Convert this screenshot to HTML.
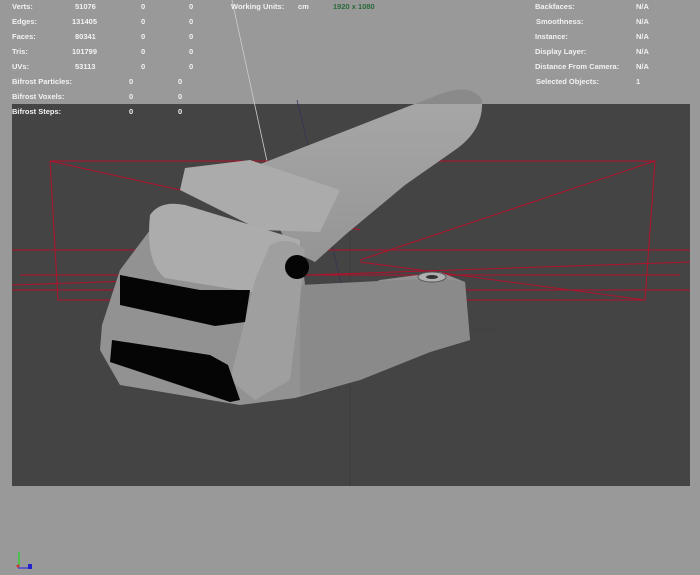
<!DOCTYPE html>
<html><head><style>
html,body{margin:0;padding:0;width:700px;height:575px;overflow:hidden;background:#999;}
.t{position:absolute;font-family:"Liberation Sans",sans-serif;font-size:7.5px;font-weight:bold;color:#f2f2f2;white-space:nowrap;}
</style></head><body>
<svg width="700" height="575" style="position:absolute;left:0;top:0">
<defs>
<clipPath id="top"><rect x="0" y="0" width="700" height="104"/></clipPath>
<linearGradient id="hg" x1="0" y1="0" x2="0" y2="1"><stop offset="0" stop-color="#a8a8a8"/><stop offset="1" stop-color="#959595"/></linearGradient>
</defs>
<rect x="0" y="0" width="700" height="575" fill="#999"/>
<rect x="12" y="104" width="678" height="382" fill="#444"/>
<line x1="232" y1="0" x2="270" y2="175" stroke="#ccc" stroke-width="0.8"/>
<line x1="297" y1="100" x2="350" y2="320" stroke="#335" stroke-width="0.8"/>
<line x1="350" y1="230" x2="350" y2="486" stroke="#3a3a3a" stroke-width="0.8"/>
<line x1="100" y1="330" x2="500" y2="330" stroke="#3a3a3a" stroke-width="0.6"/>
<g stroke="#b0102a" stroke-width="1" fill="none">
<polyline points="50,161 655,161 645,300 58,300 50,161"/>
<line x1="50" y1="161" x2="360" y2="230"/>
<line x1="655" y1="161" x2="360" y2="260"/>
<line x1="360" y1="262" x2="645" y2="300"/>
<line x1="12" y1="250" x2="690" y2="250"/>
<line x1="12" y1="290" x2="690" y2="290"/>
<line x1="12" y1="285" x2="690" y2="262"/>
<line x1="20" y1="275" x2="680" y2="275"/>
</g>
<!-- handle -->
<path id="h" d="M250,168 L430,98 Q470,80 482,100 Q484,130 455,150 L405,185 L345,235 L315,262 L290,250 Z" fill="url(#hg)"/>
<path d="M250,168 L430,98 Q470,80 482,100 Q484,130 455,150 L405,185 L345,235 L315,262 L290,250 Z" fill="#8a8a8a" clip-path="url(#top)"/>
<!-- block top -->
<path d="M180,190 L185,168 L250,160 L340,190 L320,232 L260,230 Z" fill="#ababab"/>
<!-- body -->
<path d="M102,325 L120,270 L150,230 L185,215 L300,240 L305,285 L360,288 L380,280 L440,272 L465,282 L470,340 L430,352 L360,380 L295,398 L240,405 L120,385 L100,350 Z" fill="#929292"/>
<path d="M300,285 L440,278 L465,282 L470,340 L430,352 L360,380 L300,395 Z" fill="#8a8a8a"/>
<path d="M150,215 Q160,200 185,205 L300,240 L300,300 L165,278 Q145,262 150,215 Z" fill="#acacac"/>
<path d="M255,280 L270,245 Q290,235 305,250 L300,300 L290,380 L255,400 L230,380 Z" fill="#9f9f9f"/>
<circle cx="297" cy="267" r="12" fill="#050505"/>
<path d="M120,275 L200,290 L250,290 L245,322 L215,326 L120,305 Z" fill="#050505"/>
<path d="M112,340 L210,355 L228,365 L240,400 L230,402 L110,362 Z" fill="#050505"/>
<ellipse cx="432" cy="277" rx="14" ry="5" fill="#b0b0b0" stroke="#555"/>
<ellipse cx="432" cy="277" rx="6" ry="2" fill="#333"/>
<line x1="19" y1="552" x2="19" y2="566" stroke="#3c3" stroke-width="1.5"/>
<line x1="18" y1="568" x2="30" y2="568" stroke="#44c" stroke-width="1.5"/>
<circle cx="18" cy="566" r="1.5" fill="#c33"/>
<rect x="28" y="564" width="4" height="5" fill="#22c"/>
</svg>
<div class="t" style="left:12px;top:2px">Verts:</div><div class="t" style="left:75px;top:2px">51076</div><div class="t" style="left:141px;top:2px">0</div><div class="t" style="left:189px;top:2px">0</div>
<div class="t" style="left:12px;top:17px">Edges:</div><div class="t" style="left:72px;top:17px">131405</div><div class="t" style="left:141px;top:17px">0</div><div class="t" style="left:189px;top:17px">0</div>
<div class="t" style="left:12px;top:32px">Faces:</div><div class="t" style="left:75px;top:32px">80341</div><div class="t" style="left:141px;top:32px">0</div><div class="t" style="left:189px;top:32px">0</div>
<div class="t" style="left:12px;top:47px">Tris:</div><div class="t" style="left:72px;top:47px">101799</div><div class="t" style="left:141px;top:47px">0</div><div class="t" style="left:189px;top:47px">0</div>
<div class="t" style="left:12px;top:62px">UVs:</div><div class="t" style="left:75px;top:62px">53113</div><div class="t" style="left:141px;top:62px">0</div><div class="t" style="left:189px;top:62px">0</div>
<div class="t" style="left:12px;top:77px">Bifrost Particles:</div><div class="t" style="left:129px;top:77px">0</div><div class="t" style="left:178px;top:77px">0</div>
<div class="t" style="left:12px;top:92px">Bifrost Voxels:</div><div class="t" style="left:129px;top:92px">0</div><div class="t" style="left:178px;top:92px">0</div>
<div class="t" style="left:12px;top:107px">Bifrost Steps:</div><div class="t" style="left:129px;top:107px">0</div><div class="t" style="left:178px;top:107px">0</div>
<div class="t" style="left:231px;top:2px">Working Units:</div><div class="t" style="left:298px;top:2px">cm</div>
<div class="t" style="left:333px;top:2px;color:#2a6a3a">1920 x 1080</div>
<div class="t" style="left:535px;top:2px">Backfaces:</div><div class="t" style="left:636px;top:2px">N/A</div>
<div class="t" style="left:536px;top:17px">Smoothness:</div><div class="t" style="left:636px;top:17px">N/A</div>
<div class="t" style="left:535px;top:32px">Instance:</div><div class="t" style="left:636px;top:32px">N/A</div>
<div class="t" style="left:535px;top:47px">Display Layer:</div><div class="t" style="left:636px;top:47px">N/A</div>
<div class="t" style="left:535px;top:62px">Distance From Camera:</div><div class="t" style="left:636px;top:62px">N/A</div>
<div class="t" style="left:536px;top:77px">Selected Objects:</div><div class="t" style="left:636px;top:77px">1</div>
</body></html>
